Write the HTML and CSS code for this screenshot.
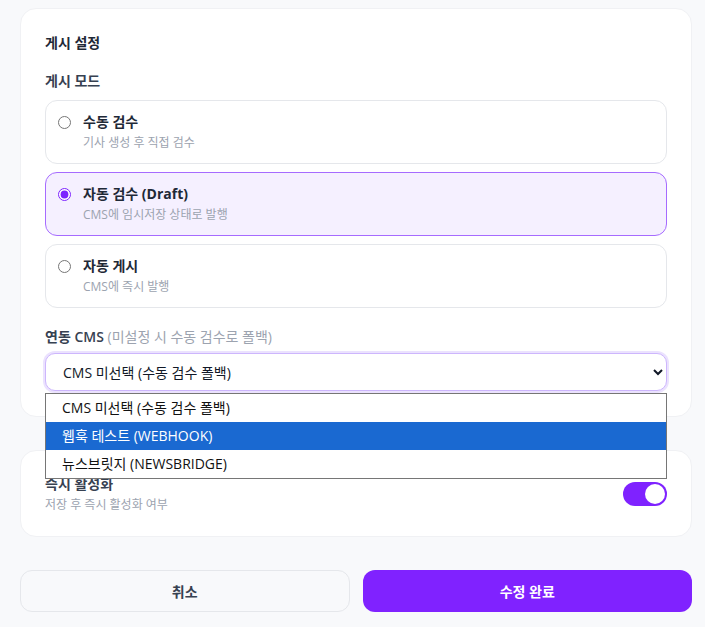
FILE: index.html
```html
<!DOCTYPE html>
<html lang="ko">
<head>
<meta charset="utf-8">
<link rel="stylesheet" href="styles.css">
</head>
<body>
<div class="page">
  <section class="card card-main">
    <h2 class="card-title">게시 설정</h2>
    <div class="field-label">게시 모드</div>
    <div class="options">
      <label class="option">
        <input type="radio" name="mode">
        <span class="option-text">
          <span class="option-title">수동 검수</span>
          <span class="option-desc">기사 생성 후 직접 검수</span>
        </span>
      </label>
      <label class="option selected">
        <input type="radio" name="mode" checked>
        <span class="option-text">
          <span class="option-title">자동 검수 (Draft)</span>
          <span class="option-desc">CMS에 임시저장 상태로 발행</span>
        </span>
      </label>
      <label class="option">
        <input type="radio" name="mode">
        <span class="option-text">
          <span class="option-title">자동 게시</span>
          <span class="option-desc">CMS에 즉시 발행</span>
        </span>
      </label>
    </div>
    <div class="field-label cms-label">연동 CMS <span class="hint">(미설정 시 수동 검수로 폴백)</span></div>
    <div class="select-wrap">
      <select class="select">
        <option>CMS 미선택 (수동 검수 폴백)</option>
        <option>웹훅 테스트 (WEBHOOK)</option>
        <option>뉴스브릿지 (NEWSBRIDGE)</option>
      </select>
      <ul class="dropdown">
        <li class="dropdown-item">CMS 미선택 (수동 검수 폴백)</li>
        <li class="dropdown-item active">웹훅 테스트 (WEBHOOK)</li>
        <li class="dropdown-item">뉴스브릿지 (NEWSBRIDGE)</li>
      </ul>
    </div>
  </section>

  <section class="card card-toggle">
    <div class="toggle-text">
      <div class="toggle-title">즉시 활성화</div>
      <div class="toggle-desc">저장 후 즉시 활성화 여부</div>
    </div>
    <span class="switch"><span class="knob"></span></span>
  </section>

  <div class="actions">
    <button class="btn btn-cancel">취소</button>
    <button class="btn btn-primary">수정 완료</button>
  </div>
</div>
</body>
</html>
```

FILE: styles.css
```css
* { box-sizing: border-box; }
html, body { margin: 0; padding: 0; }
body {
  background: #f8f9fb;
  font-family: "Open Sans", "Noto Sans CJK KR", sans-serif;
  color: #1f2937;
}
.page {
  padding: 8px 13px 0 20px;
}
.card {
  background: #fff;
  border: 1px solid #f0f1f4;
  border-radius: 16px;
  padding: 24px;
}
.card-main {
  padding-bottom: 25px;
}
.card-title {
  margin: 0;
  font-size: 14px;
  line-height: 20px;
  font-weight: 700;
  color: #1f2937;
}
.field-label {
  margin-top: 18px;
  font-size: 14px;
  line-height: 20px;
  font-weight: 600;
  color: #374151;
}
.options {
  margin-top: 9px;
  display: flex;
  flex-direction: column;
  gap: 8px;
}
.option {
  display: flex;
  align-items: flex-start;
  gap: 12px;
  border: 1px solid #e5e7eb;
  border-radius: 12px;
  padding: 11px 12px 11px 12px;
  height: 64px;
}
.option.selected {
  border-color: #a66bff;
  background: #f5f0ff;
}
.option input {
  margin: 4px 0 0 0;
  width: 13px;
  height: 13px;
  accent-color: #7c22ff;
}
.option-text {
  display: flex;
  flex-direction: column;
  gap: 2px;
}
.option-title {
  font-size: 14px;
  line-height: 20px;
  font-weight: 700;
  color: #1f2937;
}
.option-desc {
  font-size: 12px;
  line-height: 18px;
  color: #9ca3af;
}
.cms-label {
  margin-top: 19px;
  margin-bottom: 6px;
}
.hint {
  font-weight: 400;
  color: #9ca3af;
}
.select-wrap {
  position: relative;
}
.select {
  display: block;
  width: 100%;
  height: 38px;
  border: 1px solid #cdb6fd;
  border-radius: 10px;
  box-shadow: 0 0 0 2px #ebe2fe;
  background: #fff;
  padding: 0 10px 0 13px;
  font-family: inherit;
  font-size: 14px;
  color: #111827;
  outline: none;
}
.dropdown {
  position: absolute;
  top: calc(100% + 2px);
  left: 0;
  right: 0;
  margin: 0;
  padding: 0;
  list-style: none;
  background: #fff;
  border: 1px solid #767676;
  z-index: 5;
}
.dropdown-item {
  height: 28px;
  line-height: 28px;
  padding-left: 16px;
  font-size: 14px;
  color: #111;
}
.dropdown-item.active {
  background: #1a69d1;
  color: #fff;
}
.card-toggle {
  margin-top: 33px;
  display: flex;
  align-items: center;
  justify-content: space-between;
  padding: 23px 24px 22px 24px;
}
.toggle-title {
  font-size: 14px;
  line-height: 20px;
  font-weight: 600;
  color: #374151;
}
.toggle-desc {
  margin-top: 2px;
  font-size: 12px;
  line-height: 18px;
  color: #9ca3af;
}
.switch {
  display: flex;
  justify-content: flex-end;
  align-items: center;
  width: 44px;
  height: 24px;
  border-radius: 12px;
  background: #7f22ff;
  padding: 2px;
}
.knob {
  width: 20px;
  height: 20px;
  border-radius: 50%;
  background: #fff;
}
.actions {
  margin-top: 33px;
  display: grid;
  grid-template-columns: 1fr 1fr;
  gap: 13px;
}
.btn {
  height: 42px;
  border-radius: 12px;
  font-family: inherit;
  font-size: 14px;
  font-weight: 700;
}
.btn-cancel {
  background: #f8f9fb;
  border: 1px solid #e5e7eb;
  color: #374151;
}
.btn-primary {
  background: #8022ff;
  border: none;
  color: #fff;
}
```
